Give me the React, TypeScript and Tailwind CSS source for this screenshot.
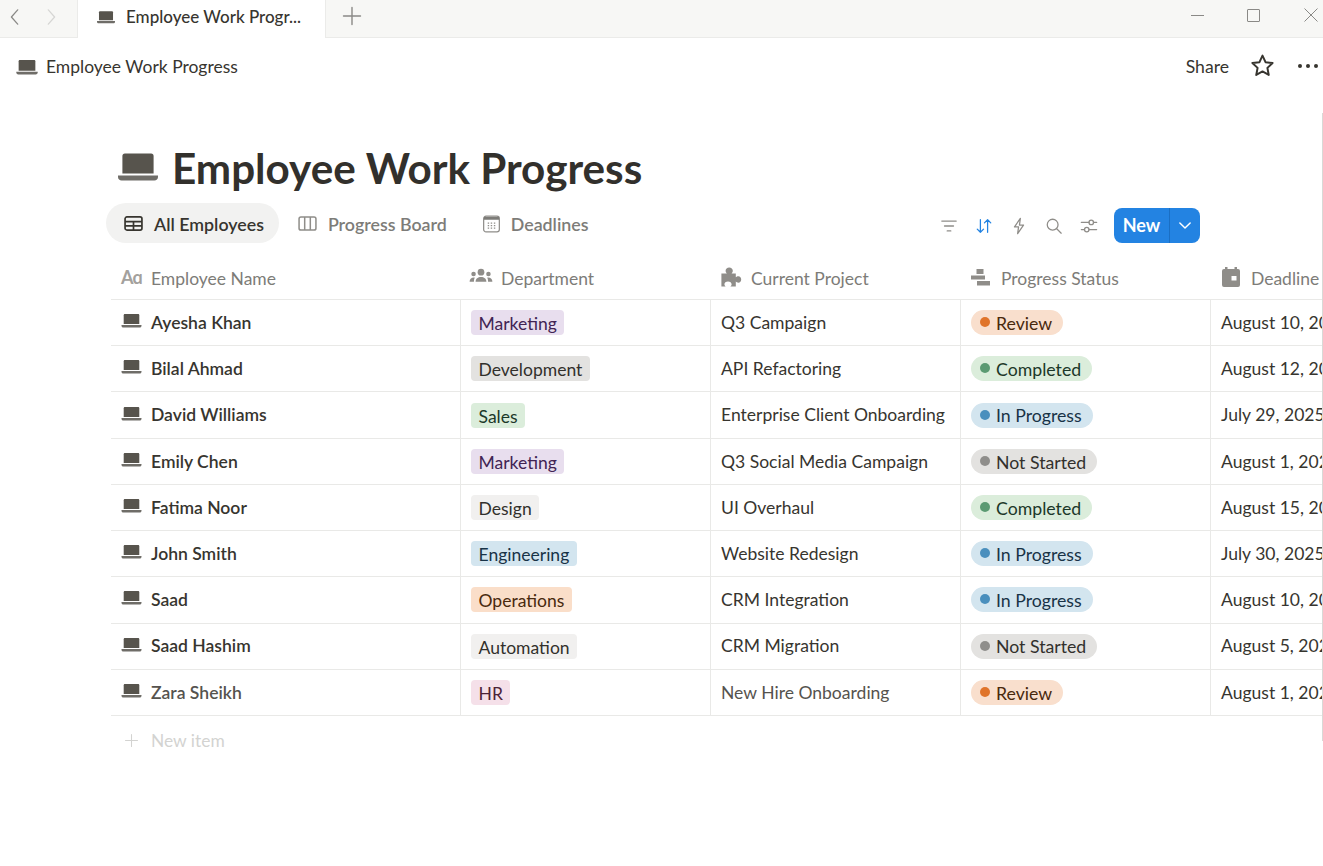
import React from "react";

const font = "font-['Lato','Noto_Sans',sans-serif]";

const rows = [
  { name: "Ayesha Khan", dept: "Marketing", deptClass: "bg-[#e8deee] text-[#412454]", project: "Q3 Campaign", status: "Review", deadline: "August 10, 2025" },
  { name: "Bilal Ahmad", dept: "Development", deptClass: "bg-[#e3e2e0] text-[#32302c]", project: "API Refactoring", status: "Completed", deadline: "August 12, 2025" },
  { name: "David Williams", dept: "Sales", deptClass: "bg-[#dbeddb] text-[#1c3829]", project: "Enterprise Client Onboarding", status: "In Progress", deadline: "July 29, 2025" },
  { name: "Emily Chen", dept: "Marketing", deptClass: "bg-[#e8deee] text-[#412454]", project: "Q3 Social Media Campaign", status: "Not Started", deadline: "August 1, 2025" },
  { name: "Fatima Noor", dept: "Design", deptClass: "bg-[#f1f0ef] text-[#32302c]", project: "UI Overhaul", status: "Completed", deadline: "August 15, 2025" },
  { name: "John Smith", dept: "Engineering", deptClass: "bg-[#d3e5ef] text-[#183347]", project: "Website Redesign", status: "In Progress", deadline: "July 30, 2025" },
  { name: "Saad", dept: "Operations", deptClass: "bg-[#fadec9] text-[#49290e]", project: "CRM Integration", status: "In Progress", deadline: "August 10, 2025" },
  { name: "Saad Hashim", dept: "Automation", deptClass: "bg-[#f1f0ef] text-[#32302c]", project: "CRM Migration", status: "Not Started", deadline: "August 5, 2025" },
  { name: "Zara Sheikh", dept: "HR", deptClass: "bg-[#f5e0e9] text-[#4c2337]", project: "New Hire Onboarding", status: "Review", deadline: "August 1, 2025" },
];

const statusStyles: Record<string, { pill: string; dot: string }> = {
  Review: { pill: "bg-[#f9dfcd] text-[#49290e]", dot: "bg-[#e0742a]" },
  Completed: { pill: "bg-[#dbeddb] text-[#1c3829]", dot: "bg-[#5b9a72]" },
  "In Progress": { pill: "bg-[#d3e5ef] text-[#183347]", dot: "bg-[#4a8fbd]" },
  "Not Started": { pill: "bg-[#e3e2e0] text-[#32302c]", dot: "bg-[#8f8e8b]" },
};

function Laptop({ className }: { className: string }) {
  return (
    <svg viewBox="0 0 20 14" className={className}>
      <path d="M3.4 0h13.2c.7 0 1.2.5 1.2 1.2V10H2.2V1.2C2.2.5 2.7 0 3.4 0z" fill="#57544d" />
      <path d="M0 11h20v.7c0 1-.8 1.8-1.8 1.8H1.8C.8 13.5 0 12.7 0 11.7z" fill="#6f6d68" />
    </svg>
  );
}

function Gray({ children, className }: { children: React.ReactNode; className: string }) {
  return (
    <svg viewBox="0 0 20 20" fill="#8f8d89" className={className}>
      {children}
    </svg>
  );
}

function Line({ children, className, color = "#8f8d89" }: { children: React.ReactNode; className: string; color?: string }) {
  return (
    <svg viewBox="0 0 20 20" fill="none" stroke={color} strokeWidth="1.4" strokeLinecap="round" strokeLinejoin="round" className={className}>
      {children}
    </svg>
  );
}

function HeaderCell({ icon, label }: { icon: React.ReactNode; label: string }) {
  return (
    <div className="flex h-[40px] w-[250px] shrink-0 items-center pl-[10px] text-[17.5px] text-[#7d7c78]">
      <span className="mb-[5px] mr-[10px] flex w-[20px] shrink-0 justify-center">{icon}</span>
      <span className="whitespace-nowrap">{label}</span>
    </div>
  );
}

export default function App() {
  return (
    <div className={`${font} relative h-[866px] w-[1323px] overflow-hidden bg-white text-[#37352f]`}>
      {/* window chrome */}
      <div className="flex h-[38px] items-stretch border-b border-[#ebebe9] bg-[#f7f7f5]">
        <div className="flex w-[77px] items-center gap-[18px] pb-[4px] pl-[6px]">
          <Line className="h-[18px] w-[18px]" color="#8a8986"><path d="M13 2 6 10l7 8" /></Line>
          <Line className="h-[18px] w-[18px]" color="#d6d6d4"><path d="m7 2 7 8-7 8" /></Line>
        </div>
        <div className="flex h-[38px] w-[249px] items-center border-x border-[#ebebe9] bg-white pb-[4px] pl-[19px]">
          <Laptop className="h-[13px] w-[18px]" />
          <span className="ml-[11px] text-[17px] font-medium text-[#37352f]">Employee Work Progr...</span>
        </div>
        <div className="ml-[16px] flex items-center pb-[6px]">
          <Line className="h-[20px] w-[20px]" color="#8a8986"><path d="M10 1.500v17M1.500 10h17" /></Line>
        </div>
        <div className="ml-auto flex items-center pb-[7px]">
          <div className="h-px w-[13px] bg-[#8a8986]" />
          <div className="ml-[43px] h-[13px] w-[13px] rounded-[1px] border border-[#8a8986]" />
          <svg viewBox="0 0 14 14" className="ml-[44px] mr-[5px] h-[14px] w-[14px]" stroke="#8a8986" fill="none"><path d="m.5.5 13 13M13.500.5l-13 13" /></svg>
        </div>
      </div>

      {/* page header */}
      <div className="flex h-[58px] items-center pl-[16px] pr-[5px]">
        <Laptop className="h-[15px] w-[22px]" />
        <span className="ml-[8px] text-[17.5px]">Employee Work Progress</span>
        <span className="ml-auto text-[17.6px]">Share</span>
        <svg viewBox="0 0 24 24" className="mb-[3px] ml-[21px] h-[25px] w-[25px]" fill="none" stroke="#37352f" strokeWidth="1.9" strokeLinejoin="round">
          <path d="m12 2.500 2.900 6.300 6.800.8-5 4.700 1.300 6.800L12 17.700l-6 3.400 1.300-6.800-5-4.700 6.800-.8z" />
        </svg>
        <div className="mb-[2px] ml-[23px] flex gap-[4px]">
          <span className="h-[4px] w-[4px] rounded-full bg-[#37352f]" />
          <span className="h-[4px] w-[4px] rounded-full bg-[#37352f]" />
          <span className="h-[4px] w-[4px] rounded-full bg-[#37352f]" />
        </div>
      </div>

      {/* title */}
      <div className="mt-[46px] flex h-[52px] items-center pl-[118px]">
        <Laptop className="mb-[2px] h-[29px] w-[40px]" />
        <h1 className="ml-[14px] whitespace-nowrap text-[42.2px] font-bold leading-none text-[#32302c]">Employee Work Progress</h1>
      </div>

      {/* views + toolbar */}
      <div className="mt-[9px] flex h-[40px] items-center pl-[106px]">
        <div className="flex h-[40px] items-center rounded-full bg-[#f2f2f1] pl-[18px] pr-[15px] pt-[3px] font-semibold">
          <svg viewBox="0 0 20 16" className="mb-[3px] h-[15px] w-[19px]" fill="none" stroke="#37352f" strokeWidth="1.8"><rect x="1" y="1" width="18" height="14" rx="2" /><path d="M1 6h18M1 10.500h18M10 6v9" /></svg>
          <span className="ml-[11px] text-[17.8px]">All Employees</span>
        </div>
        <div className="ml-[19px] flex items-center pt-[3px] font-semibold text-[#7d7c78]">
          <svg viewBox="0 0 20 16" className="mb-[3px] h-[15px] w-[19px]" fill="none" stroke="#8f8d89" strokeWidth="1.6"><rect x="1" y="1" width="18" height="14" rx="2" /><path d="M7 1v14M13 1v14" /></svg>
          <span className="ml-[11px] text-[17.8px]">Progress Board</span>
        </div>
        <div className="ml-[36px] flex items-center pt-[3px] font-semibold text-[#7d7c78]">
          <svg viewBox="0 0 18 18" className="mb-[2px] h-[18px] w-[17px]" fill="none"><rect x=".7" y=".7" width="16.600" height="16.600" rx="2.500" stroke="#8f8d89" strokeWidth="1.300" /><path d="M1 1.500h16v3H1z" fill="#7d7c78" /><path d="M5 8h1.500M8.200 8h1.500M11.500 8h1.500M5 10.700h1.500M8.200 10.700h1.500M11.500 10.700h1.500M5 13.400h1.500M8.200 13.400h1.500M11.500 13.400h1.500" stroke="#8f8d89" strokeWidth="1.300" /></svg>
          <span className="ml-[11px] text-[17.8px]">Deadlines</span>
        </div>
        <div className="ml-auto mr-[123px] flex items-center pt-[5px]">
          <Line className="h-[18px] w-[18px]"><path d="M2 4.500h16M5 10h10M8 15.500h4" /></Line>
          <Line className="ml-[17px] h-[18px] w-[18px]" color="#2383e2"><path d="M6 3v14M2.500 13.500 6 17l3.500-3.500M14 17V3M10.500 6.500 14 3l3.500 3.500" /></Line>
          <Line className="ml-[17px] h-[18px] w-[18px]"><path d="M11.500 1.500 5 11h4.500l-1 7.500L15 9h-4.500z" /></Line>
          <Line className="ml-[17px] h-[18px] w-[18px]"><circle cx="8.500" cy="8.500" r="6" /><path d="m13 13 5 5" /></Line>
          <Line className="ml-[17px] h-[18px] w-[18px]"><path d="M1.500 6H10M15 6h3.500M1.500 14H5M10 14h8.500" /><circle cx="12.500" cy="6" r="2.500" /><circle cx="7.500" cy="14" r="2.500" /></Line>
          <div className="ml-[16px] flex h-[35px] w-[86px] items-stretch rounded-[8px] bg-[#2383e2] text-white">
            <span className="flex w-[56px] items-center justify-center border-r border-[#1a6fc4] text-[18px] font-bold">New</span>
            <span className="flex flex-1 items-center justify-center">
              <svg viewBox="0 0 14 8" className="h-[7px] w-[12px]" fill="none" stroke="#ffffff" strokeWidth="1.700" strokeLinecap="round" strokeLinejoin="round"><path d="m1 1 6 6 6-6" /></svg>
            </span>
          </div>
        </div>
      </div>

      {/* table */}
      <div className="ml-[111px] mt-[16px] w-[1300px]">
        <div className="flex border-b border-[#e9e9e7]">
          <div className="flex h-[40px] w-[350px] shrink-0 items-center pl-[10px] text-[17.5px] text-[#7d7c78]">
            <span className="mb-[4px] mr-[10px] w-[20px] whitespace-nowrap text-[18px] font-bold leading-none tracking-[-1px] text-[#a3a19d]">Aɑ</span>
            <span>Employee Name</span>
          </div>
          <HeaderCell
            label="Department"
            icon={<Gray className="h-[24px] w-[26px] shrink-0"><circle cx="10" cy="6" r="2.800" /><circle cx="3.800" cy="7.500" r="1.900" /><circle cx="16.200" cy="7.500" r="1.900" /><path d="M5.500 14c0-2.700 2-4 4.500-4s4.500 1.300 4.500 4zM.5 14c0-2 1.300-3.500 3.500-3.500.5 0 .8 0 .8 0-.5 1-.7 2.200-.7 3.500zM19.500 14c0-2-1.300-3.500-3.500-3.500-.5 0-.8 0-.8 0 .5 1 .7 2.200.7 3.500z" /></Gray>}
          />
          <HeaderCell
            label="Current Project"
            icon={<Gray className="h-[24px] w-[24px] shrink-0"><path d="M2 7h4.500c-.6-.6-1-1.200-1-2.200C5.500 3.200 6.800 2 8.500 2s3 1.200 3 2.800c0 1-.4 1.600-1 2.200H14v3.300c.6-.6 1.200-1 2.100-1 1.500 0 2.400 1.200 2.400 2.700S17.600 14.700 16.100 14.700c-.9 0-1.500-.4-2.100-1V18H9.500c.6-.6 1-1.200 1-2 0-1.300-1.200-2.300-3-2.300s-3 1-3 2.300c0 .8.400 1.400 1 2H2z" /></Gray>}
          />
          <HeaderCell
            label="Progress Status"
            icon={<Gray className="h-[20px] w-[20px]"><path d="M5.500 2h7v5h-7zM0 8.500h14v4H0zM6 14h13v4.500H6z" /></Gray>}
          />
          <HeaderCell
            label="Deadline"
            icon={<Gray className="h-[20px] w-[20px]"><path d="M4 0h2.500v2h7V0H16v2h1a2 2 0 0 1 2 2v14a2 2 0 0 1-2 2H3a2 2 0 0 1-2-2V4a2 2 0 0 1 2-2h1z" /><rect x="10.500" y="9" width="5" height="4.500" fill="#ffffff" /></Gray>}
          />
        </div>

        {rows.map((row, i) => (
          <div key={row.name} className="flex h-[46.22px] border-b border-[#e9e9e7] text-[17.55px]">
            <div className={`flex w-[350px] shrink-0 items-center border-r border-[#e9e9e7] pl-[10px] pt-[1px] font-semibold ${i === rows.length - 1 ? "text-[#55534e]" : "text-[#37352f]"}`}>
              <Laptop className="mb-[4px] h-[14px] w-[21px]" />
              <span className="ml-[9px]">{row.name}</span>
            </div>
            <div className="flex w-[250px] shrink-0 items-center border-r border-[#e9e9e7] pl-[10px]">
              <span className={`h-[25px] rounded-[4px] px-[7.500px] pt-[1px] text-[17.55px] leading-[25px] ${row.deptClass}`}>{row.dept}</span>
            </div>
            <div className={`flex w-[250px] shrink-0 items-center whitespace-nowrap border-r border-[#e9e9e7] pl-[10px] pt-[1px] ${i === rows.length - 1 ? "text-[#55534e]" : "text-[#37352f]"}`}>
              {row.project}
            </div>
            <div className="flex w-[250px] shrink-0 items-center border-r border-[#e9e9e7] pl-[10px]">
              <span className={`flex h-[25px] items-center rounded-full pl-[9px] pr-[11px] pt-[3px] text-[17.7px] ${statusStyles[row.status].pill}`}>
                <span className={`mb-[4px] mr-[6px] h-[10px] w-[10px] rounded-full ${statusStyles[row.status].dot}`} />
                {row.status}
              </span>
            </div>
            <div className="flex w-[250px] shrink-0 items-center whitespace-nowrap pl-[10px] pt-[1px]">{row.deadline}</div>
          </div>
        ))}

        <div className="flex h-[50px] items-center pl-[13px] text-[17.4px] text-[#d3d3d1]">
          <Line className="h-[15px] w-[15px]" color="#d3d3d1"><path d="M10 2v16M2 10h16" /></Line>
          <span className="ml-[12px]">New item</span>
        </div>
      </div>

      {/* scrollbar edge */}
      <div className="absolute right-0 top-[113px] h-[628px] w-px bg-[#d9d9d6]" />
    </div>
  );
}
